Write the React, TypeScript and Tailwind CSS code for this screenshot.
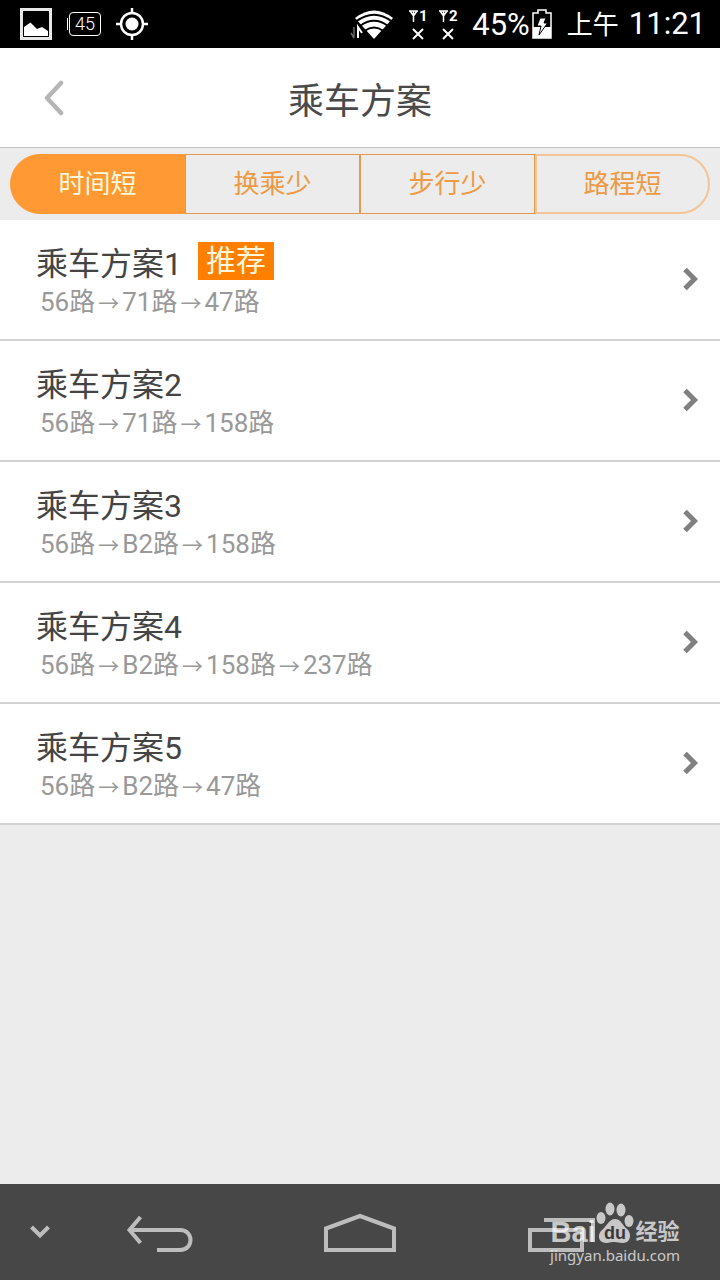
import { Fragment, useState } from 'react';

interface Plan {
  name: string;
  lines: string[];
  recommended?: boolean;
}

const TABS = ['时间短', '换乘少', '步行少', '路程短'];

const PLANS: Plan[] = [
  { name: '乘车方案1', lines: ['56路', '71路', '47路'], recommended: true },
  { name: '乘车方案2', lines: ['56路', '71路', '158路'] },
  { name: '乘车方案3', lines: ['56路', 'B2路', '158路'] },
  { name: '乘车方案4', lines: ['56路', 'B2路', '158路', '237路'] },
  { name: '乘车方案5', lines: ['56路', 'B2路', '47路'] },
];

function Signal({ sim }: { sim: number }) {
  return (
    <div className="flex w-5 flex-col items-center">
      <div className="flex h-4 items-center">
        <svg width="9" height="12" viewBox="0 0 9 12" fill="none" stroke="#fff" strokeWidth="1.5">
          <path d="M0 1H9M1 1L4.500 6L8 1M4.500 1V12" />
        </svg>
        <span className="ml-px text-[15px] leading-4 font-bold">{sim}</span>
      </div>
      <svg className="mt-1" width="12" height="12" viewBox="0 0 12 12" stroke="#fff" strokeWidth="2">
        <path d="M1 1L11 11M11 1L1 11" />
      </svg>
    </div>
  );
}

function StatusBar() {
  return (
    <div className="flex h-12 items-center justify-between bg-black pr-[14px] pl-5 text-white">
      <div className="flex items-center gap-[15px]">
        <svg width="32" height="32" viewBox="0 0 32 32">
          <rect x="1.500" y="1.500" width="29" height="29" fill="none" stroke="#e8e8e8" strokeWidth="3" />
          <path d="M4 28V19L10.500 14.500L17 21L22 19L28 23V28Z" fill="#fff" />
        </svg>
        <div className="flex items-center gap-px">
          <div className="h-3 w-px bg-white" />
          <div className="flex h-6 w-8 items-center justify-center rounded-sm border border-white text-[18px] leading-5 font-light">45</div>
        </div>
        <svg width="32" height="32" viewBox="0 0 32 32" fill="none" stroke="#fff" strokeWidth="2.500">
          <circle cx="16" cy="16" r="11" />
          <circle cx="16" cy="16" r="6.500" fill="#fff" stroke="none" />
          <path d="M16 0V5M16 27V32M0 16H5M27 16H32" />
        </svg>
      </div>
      <div className="flex items-center">
        <svg width="44" height="30" viewBox="0 0 44 30" fill="none" stroke="#fff">
          <path d="M5 9Q24 -6 43 9L24 30Z" fill="#fff" stroke="none" />
          <path d="M6 12.500Q24 -1 42 12.500M10 17Q24 6.500 38 17M14.500 22Q24 15 33.500 22" stroke="#000" strokeWidth="1.800" />
          <path d="M4 18V29M4 29L1 24" stroke="#666" strokeWidth="1.500" />
          <path d="M8 29V18L12 24" stroke="#fff" strokeWidth="2" />
        </svg>
        <div className="ml-[14px] flex gap-[10px]">
          <Signal sim={1} />
          <Signal sim={2} />
        </div>
        <span className="ml-[14px] pt-0.5 text-[31px] leading-10">45%</span>
        <svg className="mr-px ml-0.5" width="20" height="30" viewBox="0 0 20 30">
          <path d="M1 4H6V1H14V4H19V29H1Z" fill="none" stroke="#fff" strokeWidth="1.500" />
          <rect x="1" y="18" width="18" height="11" fill="#fff" />
          <path d="M8 9H14L12 14H15.500L7 26L9 17H5Z" fill="#fff" stroke="#000" strokeWidth="1" />
        </svg>
        <span className="ml-[14px] pt-0.5 text-[26px] leading-10">上午</span>
        <span className="ml-[10px] text-[31px] leading-10">11:21</span>
      </div>
    </div>
  );
}

function Watermark() {
  return (
    <div className="pointer-events-none absolute right-10 bottom-4 flex flex-col items-center text-white opacity-70">
      <div className="flex items-end">
        <span className="font-['Liberation_Sans',sans-serif] text-[29px] leading-7 font-bold">Bai</span>
        <svg className="mb-0.5" width="38" height="42" viewBox="0 0 38 42" fill="#fff">
          <ellipse cx="5" cy="16" rx="4.500" ry="6" />
          <ellipse cx="14" cy="7" rx="4.500" ry="6.500" />
          <ellipse cx="25" cy="8" rx="4.500" ry="6.500" />
          <ellipse cx="33" cy="19" rx="4.500" ry="6" />
          <path d="M19 17C25 17 26 23 31 27C36 31 35 41 27 41C23 41 22 40 18 40C14 40 13 41 10 41C2 41 1 32 6 28C11 24 13 17 19 17Z" />
          <text x="19" y="37" textAnchor="middle" fontFamily="Liberation Sans, sans-serif" fontWeight="bold" fontSize="18" fill="#333">du</text>
        </svg>
        <span className="ml-0.5 text-[22px] leading-7 font-bold">经验</span>
      </div>
      <span className="font-['Noto_Sans',sans-serif] text-[15px] leading-[18px]">jingyan.baidu.com</span>
    </div>
  );
}

function NavBar() {
  return (
    <nav className="relative mt-auto grid h-24 grid-cols-[60px_1fr_1fr_1fr_60px] items-center bg-[#474747]">
      <button aria-label="收起" className="flex justify-end pr-[10px]">
        <svg width="20" height="14" viewBox="0 0 20 14" fill="none" stroke="#bdbdbd" strokeWidth="4">
          <path d="M1.500 2L10 10.500L18.500 2" />
        </svg>
      </button>
      <button aria-label="返回" className="flex justify-center">
        <svg width="72" height="40" viewBox="0 0 72 40" fill="none" stroke="#bdbdbd" strokeWidth="4">
          <path d="M7 18H56C70 18 70 38 56 38H33" />
          <path d="M16.500 5L5.500 18L16.500 31" />
        </svg>
      </button>
      <button aria-label="主页" className="flex justify-center">
        <svg width="72" height="40" viewBox="0 0 72 40" fill="none" stroke="#bdbdbd" strokeWidth="4">
          <path d="M2 38V16.500L36 4L70 16.500V38Z" />
        </svg>
      </button>
      <button aria-label="最近任务" className="flex justify-center">
        <svg width="72" height="40" viewBox="0 0 72 40" fill="none" stroke="#bdbdbd" strokeWidth="4">
          <rect x="6" y="18" width="52" height="20" />
          <path d="M20 8H69V30" />
        </svg>
      </button>
      <Watermark />
    </nav>
  );
}

export default function App() {
  const [tab, setTab] = useState(0);

  return (
    <div className="flex min-h-screen flex-col bg-[#ececec] font-[Roboto,'Noto_Sans_CJK_SC',sans-serif]">
      <StatusBar />

      {/* Header */}
      <header className="grid h-[100px] grid-cols-[107px_1fr_107px] items-center border-b border-[#c4c4c4] bg-white">
        <button aria-label="返回上一页" className="flex justify-center">
          <svg width="20" height="36" viewBox="0 0 20 36" fill="none" stroke="#b5b5b5" strokeWidth="4.500" strokeLinecap="round" strokeLinejoin="round">
            <path d="M17 3L3 18L17 33" />
          </svg>
        </button>
        <h1 className="pt-2 text-center text-[36px] leading-[48px] text-[#4a4a4a]">乘车方案</h1>
      </header>

      {/* Sort tabs */}
      <div role="tablist" className="grid grid-cols-4 px-[10px] py-[6px]">
        {TABS.map((label, i) => (
          <button
            key={label}
            role="tab"
            aria-selected={tab === i}
            onClick={() => setTab(i)}
            className={`h-[60px] border text-[26px] first:rounded-l-full last:rounded-r-full last:border-2 last:border-[#f3c496] ${
              tab === i ? 'border-[#ff9933] bg-[#ff9933] text-[#fff8dc]' : 'border-[#e3994f] text-[#ee9a45]'
            }`}
          >
            {label}
          </button>
        ))}
      </div>

      {/* Plans */}
      <ul>
        {PLANS.map(plan => (
          <li key={plan.name} className="border-b-2 border-[#d2d2d2] bg-white">
            <button className="flex h-[119px] w-full items-center justify-between pr-[21px] pb-0.5 pl-9 text-left">
              <div className="pt-2">
                <div className="flex items-start gap-4">
                  <span className="text-[32px] leading-10 text-[#444]">{plan.name}</span>
                  {plan.recommended && (
                    <span className="-mt-0.5 bg-[#ff8000] px-2 text-[30px] leading-[38px] text-[#fff8dc]">推荐</span>
                  )}
                </div>
                <div className="pl-1 text-[26px] leading-9 text-[#999]">
                  {plan.lines.map((line, i) => (
                    <Fragment key={i}>
                      {i > 0 && <span className="px-[3px] text-[21px]">→</span>}
                      {line}
                    </Fragment>
                  ))}
                </div>
              </div>
              <svg width="17" height="24" viewBox="0 0 17 24" fill="none" stroke="#808080" strokeWidth="5">
                <path d="M3 2.500L12.500 12L3 21.500" />
              </svg>
            </button>
          </li>
        ))}
      </ul>

      <NavBar />
    </div>
  );
}
